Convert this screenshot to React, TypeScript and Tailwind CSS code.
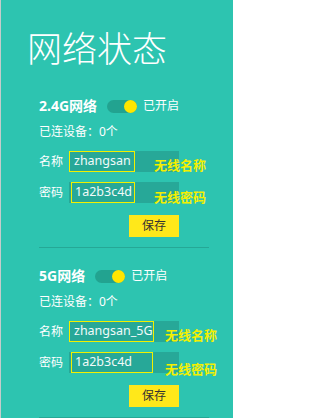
const FONT = "font-['Noto_Sans','Noto_Sans_CJK_SC',sans-serif]";

interface IBandProps {
	title: string;
	ssid: string;
	password: string;
	noteLeft: string;
	pwdNoteTop: string;
	ssidOutline: string;
	pwdOutline: string;
}

function Band({
	title,
	ssid,
	password,
	noteLeft,
	pwdNoteTop,
	ssidOutline,
	pwdOutline,
}: IBandProps) {
	return (
		<div className="pl-[38px]">
			{/* header: band name + switch */}
			<div className="flex h-[14px] items-center">
				<span className="text-[14px] font-bold leading-[14px] text-white">
					{title}
				</span>
				<div className="ml-[10px] flex h-[13px] w-[30px] items-center justify-end rounded-full bg-[#22a390]">
					<div className="h-[13px] w-[13px] rounded-full bg-[#ffe600]" />
				</div>
				<span className="ml-[6px] text-[12px] leading-[14px] text-white">
					已开启
				</span>
			</div>

			<div className="mt-[12px] h-[14px] text-[12px] leading-[14px] text-white">
				已连设备：0个
			</div>

			{/* ssid */}
			<div className="relative mt-[12px] flex h-[21px] items-center">
				<span className="w-[30px] text-[12px] leading-[14px] text-white">
					名称
				</span>
				<div className="flex h-[21px] w-[110px] items-stretch bg-[#27a898]">
					<span
						className={`flex items-center border border-[#f2f000] pl-[4px] text-[12.5px] text-[#f2fbfa] ${ssidOutline}`}
					>
						{ssid}
					</span>
				</div>
				<span
					className={`absolute top-[7px] text-[13px] font-bold leading-[14px] text-[#f4f000] ${noteLeft}`}
				>
					无线名称
				</span>
			</div>

			{/* password */}
			<div className="relative mt-[10px] flex h-[21px] items-center">
				<span className="w-[30px] text-[12px] leading-[14px] text-white">
					密码
				</span>
				<div className="flex h-[21px] w-[110px] items-stretch bg-[#27a898]">
					<span
						className={`ml-[2px] flex items-center border border-[#f2f000] pl-[3px] text-[12.5px] text-[#f2fbfa] ${pwdOutline}`}
					>
						{password}
					</span>
				</div>
				<span
					className={`absolute text-[13px] font-bold leading-[14px] text-[#f4f000] ${noteLeft} ${pwdNoteTop}`}
				>
					无线密码
				</span>
			</div>

			<button
				type="button"
				className="ml-[90px] mt-[12px] flex h-[22px] w-[50px] items-center justify-center bg-[#ffe81a] text-[12px] text-[#333]"
			>
				保存
			</button>

			<div className="mt-[10px] h-px w-[170px] bg-[#25a896]" />
		</div>
	);
}

export default function App() {
	return (
		<div
			className={`h-[418px] w-[233px] overflow-hidden border-l border-[#c3cccb] bg-[#2dc4b0] ${FONT}`}
		>
			<h1 className="ml-[26px] mt-[30px] h-[38px] text-[35px] font-light leading-[38px] text-white">
				网络状态
			</h1>

			<div className="mt-[31px]">
				<Band
					title="2.4G网络"
					ssid="zhangsan"
					password="1a2b3c4d"
					noteLeft="left-[115px]"
					pwdNoteTop="top-[8px]"
					ssidOutline="w-[66px]"
					pwdOutline="w-[64px]"
				/>
			</div>

			<div className="mt-[21px]">
				<Band
					title="5G网络"
					ssid="zhangsan_5G"
					password="1a2b3c4d"
					noteLeft="left-[126px]"
					pwdNoteTop="top-[10px]"
					ssidOutline="w-[85px]"
					pwdOutline="w-[82px]"
				/>
			</div>
		</div>
	);
}
